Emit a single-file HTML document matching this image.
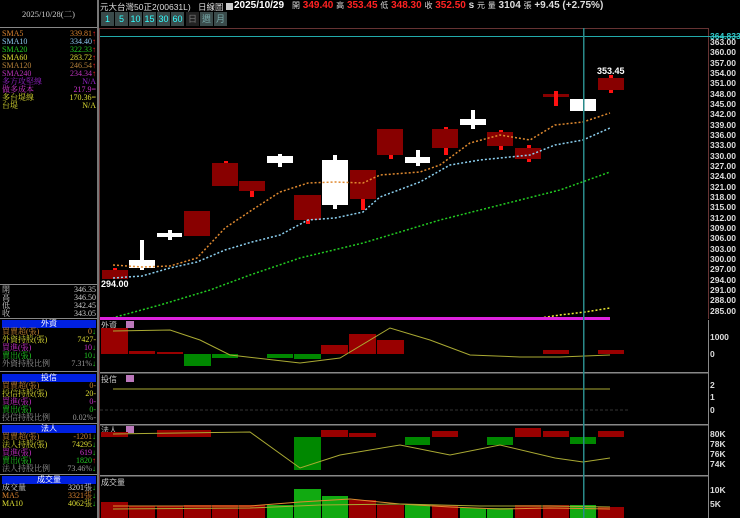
<!DOCTYPE html>
<html><head><meta charset="utf-8"><style>
*{margin:0;padding:0;box-sizing:border-box}
body{width:740px;height:518px;background:#000;overflow:hidden;position:relative;font-family:"Liberation Sans","Noto Sans CJK TC",sans-serif;font-size:9px;color:#ccc}
.a{position:absolute;white-space:nowrap}
.row{position:absolute;left:2px;width:94px;height:8px;font-size:8px;line-height:8px;font-family:"Liberation Serif","Noto Serif CJK SC",serif}
.row span{position:absolute;right:0}
.hd{position:absolute;left:2px;width:94px;height:8px;background:#0020e0;color:#fff;text-align:center;font-size:8px;line-height:8px}
.btn{position:absolute;top:12px;width:13px;height:14px;background:#3a4a4a;color:#3ff;font-size:9px;line-height:14px;text-align:center}
</style></head><body>
<div class="a" style="left:0;top:0;width:97px;height:28px;text-align:center;line-height:28px;color:#ccc;font-size:8.5px;font-family:'Liberation Serif','Noto Serif CJK SC',serif">2025/10/28(二)</div>
<div class="a" style="left:0;top:27px;width:97px;height:1px;background:#888"></div>
<div class="a" style="left:97px;top:0;width:2px;height:518px;background:#777"></div>
<div class="row" style="top:30px;color:#d9832f">SMA5<span>339.81<b style="color:#f22">↑</b></span></div>
<div class="row" style="top:38px;color:#8cc8ee">SMA10<span>334.40<b style="color:#f22">↑</b></span></div>
<div class="row" style="top:46px;color:#2c2">SMA20<span>322.33<b style="color:#f22">↑</b></span></div>
<div class="row" style="top:54px;color:#dd3">SMA60<span>283.72<b style="color:#f22">↑</b></span></div>
<div class="row" style="top:62px;color:#b7823a">SMA120<span>246.54<b style="color:#f22">↑</b></span></div>
<div class="row" style="top:70px;color:#b3b">SMA240<span>234.34<b style="color:#f22">↑</b></span></div>
<div class="row" style="top:78px;color:#92c">多方攻堅線<span>N/A</span></div>
<div class="row" style="top:86px;color:#c3c">做多成本<span>217.9=</span></div>
<div class="row" style="top:94px;color:#dd3">多台堤線<span>170.36=</span></div>
<div class="row" style="top:102px;color:#dd3">台堤<span>N/A</span></div>
<div class="a" style="left:0;top:284px;width:97px;height:1px;background:#888"></div>
<div class="row" style="top:286px">開<span>346.35</span></div>
<div class="row" style="top:294px">高<span>346.50</span></div>
<div class="row" style="top:302px">低<span>342.45</span></div>
<div class="row" style="top:310px">收<span>343.05</span></div>
<div class="a" style="left:0;top:318px;width:97px;height:1px;background:#888"></div>
<div class="hd" style="top:320px">外資</div>
<div class="row" style="top:328px;color:#c83">買賣超(張)<span>0<b style="color:#2c2">↓</b></span></div>
<div class="row" style="top:336px;color:#dd3">外資持股(張)<span>7427-</span></div>
<div class="row" style="top:344px;color:#c3c">買進(張)<span>10<b style="color:#2c2">↓</b></span></div>
<div class="row" style="top:352px;color:#2c2">賣出(張)<span>10<b style="color:#2c2">↓</b></span></div>
<div class="row" style="top:360px;color:#999">外資持股比例<span>7.31%<b style="color:#2c2">↓</b></span></div>
<div class="a" style="left:0;top:371px;width:97px;height:1px;background:#888"></div>
<div class="hd" style="top:374px">投信</div>
<div class="row" style="top:382px;color:#c83">買賣超(張)<span>0-</span></div>
<div class="row" style="top:390px;color:#dd3">投信持股(張)<span>20-</span></div>
<div class="row" style="top:398px;color:#c3c">買進(張)<span>0-</span></div>
<div class="row" style="top:406px;color:#2c2">賣出(張)<span>0-</span></div>
<div class="row" style="top:414px;color:#999">投信持股比例<span>0.02%-</span></div>
<div class="a" style="left:0;top:423px;width:97px;height:1px;background:#888"></div>
<div class="hd" style="top:425px">法人</div>
<div class="row" style="top:433px;color:#c83">買賣超(張)<span>-1201<b style="color:#2c2">↓</b></span></div>
<div class="row" style="top:441px;color:#dd3">法人持股(張)<span>74295<b style="color:#2c2">↓</b></span></div>
<div class="row" style="top:449px;color:#c3c">買進(張)<span>619<b style="color:#2c2">↓</b></span></div>
<div class="row" style="top:457px;color:#2c2">賣出(張)<span>1820<b style="color:#f22">↑</b></span></div>
<div class="row" style="top:465px;color:#999">法人持股比例<span>73.46%<b style="color:#2c2">↓</b></span></div>
<div class="a" style="left:0;top:474px;width:97px;height:1px;background:#888"></div>
<div class="hd" style="top:476px">成交量</div>
<div class="row" style="top:484px;color:#ddd">成交量<span>3201張<b style="color:#2c2">↓</b></span></div>
<div class="row" style="top:492px;color:#d9832f">MA5<span>3321張<b style="color:#2c2">↓</b></span></div>
<div class="row" style="top:500px;color:#dd3">MA10<span>4062張<b style="color:#2c2">↓</b></span></div>

<div class="a" style="left:100px;top:1px;font-size:8.5px;color:#ddd">元大台灣50正2(00631L)</div>
<div class="a" style="left:198px;top:1px;font-size:8.5px;color:#ddd">日線圖 <span style="display:inline-block;width:7px;height:7px;background:#ccc"></span></div>
<div class="a" style="left:234px;top:0;font-size:10px;font-weight:bold;color:#fff">2025/10/29</div>
<div class="a" style="left:292px;top:0;font-size:10px;font-weight:bold;color:#ddd"><span style="font-size:8px;font-weight:normal">開</span> <span style="color:#f22">349.40</span> <span style="font-size:8px;font-weight:normal">高</span> <span style="color:#f22">353.45</span> <span style="font-size:8px;font-weight:normal">低</span> <span style="color:#f22">348.30</span> <span style="font-size:8px;font-weight:normal">收</span> <span style="color:#f22">352.50</span> s <span style="font-size:8px;font-weight:normal">元</span> <span style="font-size:8px;font-weight:normal">量</span> 3104 <span style="font-size:8px;font-weight:normal">張</span> +9.45 (+2.75%)</div>
<div class="btn" style="left:101px">1</div><div class="btn" style="left:115px">5</div><div class="btn" style="left:129px">10</div><div class="btn" style="left:143px">15</div><div class="btn" style="left:157px">30</div><div class="btn" style="left:171px">60</div>
<div class="btn" style="left:186px;background:#222;color:#777">日</div><div class="btn" style="left:200px;background:#3a4a4a;color:#7aa">週</div><div class="btn" style="left:214px;background:#3a4a4a;color:#7aa">月</div>

<svg class="a" style="left:0;top:0" width="740" height="518">
<rect x="100" y="28" width="608" height="1" fill="#633"/>
<rect x="99" y="28" width="1" height="490" fill="#633"/>
<rect x="708" y="28" width="1" height="291" fill="#633"/>
<rect x="100" y="36" width="640" height="1" fill="#2aa"/>
<g fill="#800" stroke="none">
<rect x="102" y="270" width="26" height="9"/><rect x="184" y="211" width="26" height="25"/><rect x="212" y="163" width="26" height="23"/><rect x="239" y="181" width="26" height="10"/><rect x="294" y="195" width="27" height="25"/><rect x="350" y="170" width="26" height="29"/><rect x="377" y="129" width="26" height="26"/><rect x="432" y="129" width="26" height="19"/><rect x="487" y="132" width="26" height="14"/><rect x="515" y="148" width="26" height="11"/><rect x="543" y="94" width="26" height="3"/><rect x="598" y="78" width="26" height="12"/>
</g>
<g fill="#f11">
<rect x="113" y="268" width="4" height="2"/><rect x="224" y="161" width="4" height="2"/><rect x="250" y="191" width="4" height="6"/><rect x="306" y="220" width="4" height="4"/><rect x="361" y="199" width="4" height="11"/><rect x="389" y="155" width="4" height="4"/><rect x="444" y="127" width="4" height="2"/><rect x="444" y="148" width="4" height="7"/><rect x="499" y="130" width="4" height="2"/><rect x="499" y="146" width="4" height="4"/><rect x="527" y="145" width="4" height="3"/><rect x="527" y="159" width="4" height="3"/><rect x="554" y="91" width="4" height="15"/><rect x="609" y="75" width="4" height="3"/><rect x="609" y="90" width="4" height="3"/>
</g>
<g fill="#fff">
<rect x="129" y="260" width="26" height="8"/><rect x="140" y="240" width="4" height="30"/><rect x="157" y="233" width="25" height="4"/><rect x="168" y="230" width="4" height="10"/><rect x="267" y="156" width="26" height="7"/><rect x="278" y="154" width="4" height="13"/><rect x="322" y="160" width="26" height="45"/><rect x="333" y="155" width="4" height="54"/><rect x="405" y="157" width="25" height="6"/><rect x="416" y="150" width="4" height="16"/><rect x="460" y="119" width="26" height="6"/><rect x="471" y="110" width="4" height="19"/><rect x="570" y="99" width="26" height="12"/>
</g>
<polyline fill="none" stroke="#e08a30" stroke-width="1.5" stroke-dasharray="2,2" points="113,265 142,267 170,266 197,258 225,228 252,210 280,192 308,183 335,182 363,183 380,175 420,172 440,165 470,143 500,135 530,140 555,125 583,122 610,113"/>
<polyline fill="none" stroke="#8cd0f0" stroke-width="1.5" stroke-dasharray="2,2" points="113,278 142,276 170,268 197,262 225,250 252,242 280,235 308,220 335,218 363,212 380,197 420,182 450,165 480,160 510,157 530,155 555,145 583,140 610,128"/>
<polyline fill="none" stroke="#2c2" stroke-width="1.5" stroke-dasharray="2,2" points="112,318 160,305 210,290 250,275 300,258 363,243 400,232 440,220 480,210 520,200 560,190 610,172"/>
<polyline fill="none" stroke="#ee3" stroke-width="1.5" stroke-dasharray="2,2" points="540,318 560,315 585,312 610,308"/>
<rect x="100" y="317" width="510" height="3" fill="#d2d"/>
<text x="101" y="287" fill="#fff" font-size="9" font-weight="bold" font-family="Liberation Sans">294.00</text>
<text x="597" y="74" fill="#fff" font-size="9" font-weight="bold" font-family="Liberation Sans">353.45</text>
<rect x="100" y="372" width="609" height="1.5" fill="#888"/>
<rect x="100" y="424" width="609" height="1.5" fill="#888"/>
<rect x="100" y="475" width="609" height="1.5" fill="#888"/>
<rect x="708" y="320" width="1" height="198" fill="#888"/>
<g font-size="8" fill="#ccc" font-family="Noto Sans CJK TC,sans-serif"><text x="101" y="328">外資</text><text x="101" y="382">投信</text><text x="101" y="433">法人</text><text x="101" y="485">成交量</text></g>
<g fill="#b7b"><rect x="126" y="321" width="8" height="7"/><rect x="126" y="375" width="8" height="7"/><rect x="126" y="426" width="8" height="7"/></g>
<g fill="#900"><rect x="101" y="328" width="27" height="26"/><rect x="129" y="351" width="26" height="3"/><rect x="157" y="352" width="26" height="2"/><rect x="321" y="345" width="27" height="9"/><rect x="349" y="334" width="27" height="20"/><rect x="377" y="340" width="27" height="14"/><rect x="543" y="350" width="26" height="4"/><rect x="598" y="350" width="26" height="4"/></g>
<g fill="#080"><rect x="184" y="354" width="27" height="12"/><rect x="212" y="354" width="26" height="4"/><rect x="267" y="354" width="26" height="4"/><rect x="294" y="354" width="27" height="5"/></g>
<polyline fill="none" stroke="#aa3" stroke-width="1" points="113,331 170,330 200,340 230,355 300,363 340,358 390,328 430,340 470,355 520,357 560,357 610,355"/>
<line x1="113" y1="389" x2="610" y2="389" stroke="#aa3"/>
<line x1="100" y1="410" x2="630" y2="410" stroke="#333" stroke-dasharray="3,2"/>
<g fill="#900"><rect x="101" y="432" width="27" height="5"/><rect x="157" y="430" width="54" height="7"/><rect x="321" y="430" width="27" height="7"/><rect x="349" y="433" width="27" height="4"/><rect x="432" y="431" width="26" height="6"/><rect x="515" y="428" width="26" height="9"/><rect x="543" y="431" width="26" height="6"/><rect x="598" y="431" width="26" height="6"/></g>
<g fill="#080"><rect x="294" y="437" width="27" height="33"/><rect x="405" y="437" width="25" height="8"/><rect x="487" y="437" width="26" height="8"/><rect x="570" y="437" width="26" height="7"/></g>
<polyline fill="none" stroke="#aa3" stroke-width="1" points="113,434 250,432 300,468 340,455 400,445 450,455 500,445 555,458 583,462 610,458"/>
<g fill="#900"><rect x="101" y="502" width="27" height="16"/><rect x="129" y="506" width="26" height="12"/><rect x="157" y="506" width="26" height="12"/><rect x="184" y="505" width="27" height="13"/><rect x="212" y="505" width="26" height="13"/><rect x="239" y="505" width="26" height="13"/><rect x="349" y="500" width="27" height="18"/><rect x="377" y="505" width="27" height="13"/><rect x="432" y="505" width="26" height="13"/><rect x="515" y="505" width="26" height="13"/><rect x="543" y="505" width="26" height="13"/><rect x="598" y="507" width="26" height="11"/></g>
<g fill="#1a1"><rect x="267" y="505" width="26" height="13"/><rect x="294" y="489" width="27" height="29"/><rect x="322" y="496" width="26" height="22"/><rect x="405" y="505" width="25" height="13"/><rect x="460" y="508" width="26" height="10"/><rect x="487" y="508" width="26" height="10"/><rect x="570" y="505" width="26" height="13"/></g>
<polyline fill="none" stroke="#e08a30" stroke-width="1" points="113,506 250,506 300,502 350,499 400,504 450,507 500,509 550,508 610,509"/>
<polyline fill="none" stroke="#aa3" stroke-width="1" points="113,509 250,508 320,505 400,504 480,506 550,506 610,507"/>
<rect x="583" y="28" width="1.5" height="490" fill="#2a8a8a"/>
<g font-family="Liberation Sans" font-size="8.5" font-weight="bold" fill="#ddd">
<text x="710" y="39" fill="#3cc">364.833</text>
<text x="710" y="45">363.00</text><text x="710" y="55">360.00</text><text x="710" y="66">357.00</text><text x="710" y="76">354.00</text><text x="710" y="86">351.00</text><text x="710" y="97">348.00</text><text x="710" y="107">345.00</text><text x="710" y="117">342.00</text><text x="710" y="128">339.00</text><text x="710" y="138">336.00</text><text x="710" y="148">333.00</text><text x="710" y="159">330.00</text><text x="710" y="169">327.00</text><text x="710" y="179">324.00</text><text x="710" y="190">321.00</text><text x="710" y="200">318.00</text><text x="710" y="210">315.00</text><text x="710" y="221">312.00</text><text x="710" y="231">309.00</text><text x="710" y="241">306.00</text><text x="710" y="252">303.00</text><text x="710" y="262">300.00</text><text x="710" y="272">297.00</text><text x="710" y="283">294.00</text><text x="710" y="293">291.00</text><text x="710" y="303">288.00</text><text x="710" y="314">285.00</text>
<text x="710" y="340">1000</text><text x="710" y="357">0</text>
<text x="710" y="388">2</text><text x="710" y="400">1</text><text x="710" y="413">0</text>
<text x="710" y="437">80K</text><text x="710" y="447">78K</text><text x="710" y="457">76K</text><text x="710" y="467">74K</text>
<text x="710" y="493">10K</text><text x="710" y="507">5K</text>
</g>
</svg>
</body></html>
